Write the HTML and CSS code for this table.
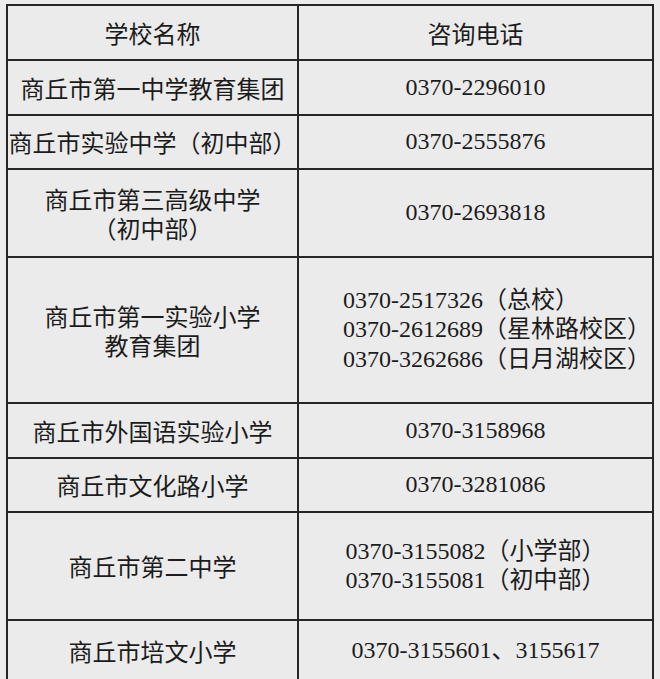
FILE: index.html
```html
<!DOCTYPE html>
<html lang="zh-CN">
<head>
<meta charset="utf-8">
<title>学校咨询电话</title>
<link rel="stylesheet" href="styles.css">
</head>
<body>
<div class="table">
  <div class="cell name">学校名称</div>
  <div class="cell name">咨询电话</div>

  <div class="cell name">商丘市第一中学教育集团</div>
  <div class="cell tel">0370-2296010</div>

  <div class="cell name">商丘市实验中学（初中部）</div>
  <div class="cell tel">0370-2555876</div>

  <div class="cell name">商丘市第三高级中学<br>（初中部）</div>
  <div class="cell tel">0370-2693818</div>

  <div class="cell name">商丘市第一实验小学<br>教育集团</div>
  <div class="cell tel tel-left"><div class="lines">0370-2517326（总校）<br>0370-2612689（星林路校区）<br>0370-3262686（日月湖校区）</div></div>

  <div class="cell name">商丘市外国语实验小学</div>
  <div class="cell tel">0370-3158968</div>

  <div class="cell name">商丘市文化路小学</div>
  <div class="cell tel">0370-3281086</div>

  <div class="cell name">商丘市第二中学</div>
  <div class="cell tel"><div class="lines">0370-3155082（小学部）<br>0370-3155081（初中部）</div></div>

  <div class="cell name">商丘市培文小学</div>
  <div class="cell tel">0370-3155601、3155617</div>
</div>
</body>
</html>
```

FILE: styles.css
```css
html, body {
  margin: 0;
  padding: 0;
  height: 679px;
  overflow: hidden;
  background: #ececec;
}

.table {
  display: grid;
  grid-template-columns: 289px 353px;
  grid-template-rows: 53px 53px 52px 86px 144px 53px 52px 106px 60px;
  gap: 2px;
  padding: 2px;
  width: max-content;
  margin: 4px 0 0 6px;
  background: #262626;
}

.cell {
  background: #ebebeb;
  color: #1c1c1c;
  display: flex;
  align-items: center;
  justify-content: center;
  text-align: center;
  font-size: 24px;
  line-height: 29.5px;
  white-space: nowrap;
}

.name {
  font-family: "Noto Sans CJK SC", "Noto Sans", sans-serif;
  font-weight: 400;
}

.tel {
  font-family: "Liberation Serif", "Noto Sans CJK SC", serif;
}

.lines {
  text-align: left;
}

.tel-left {
  justify-content: flex-start;
  padding-left: 44px;
}
```
